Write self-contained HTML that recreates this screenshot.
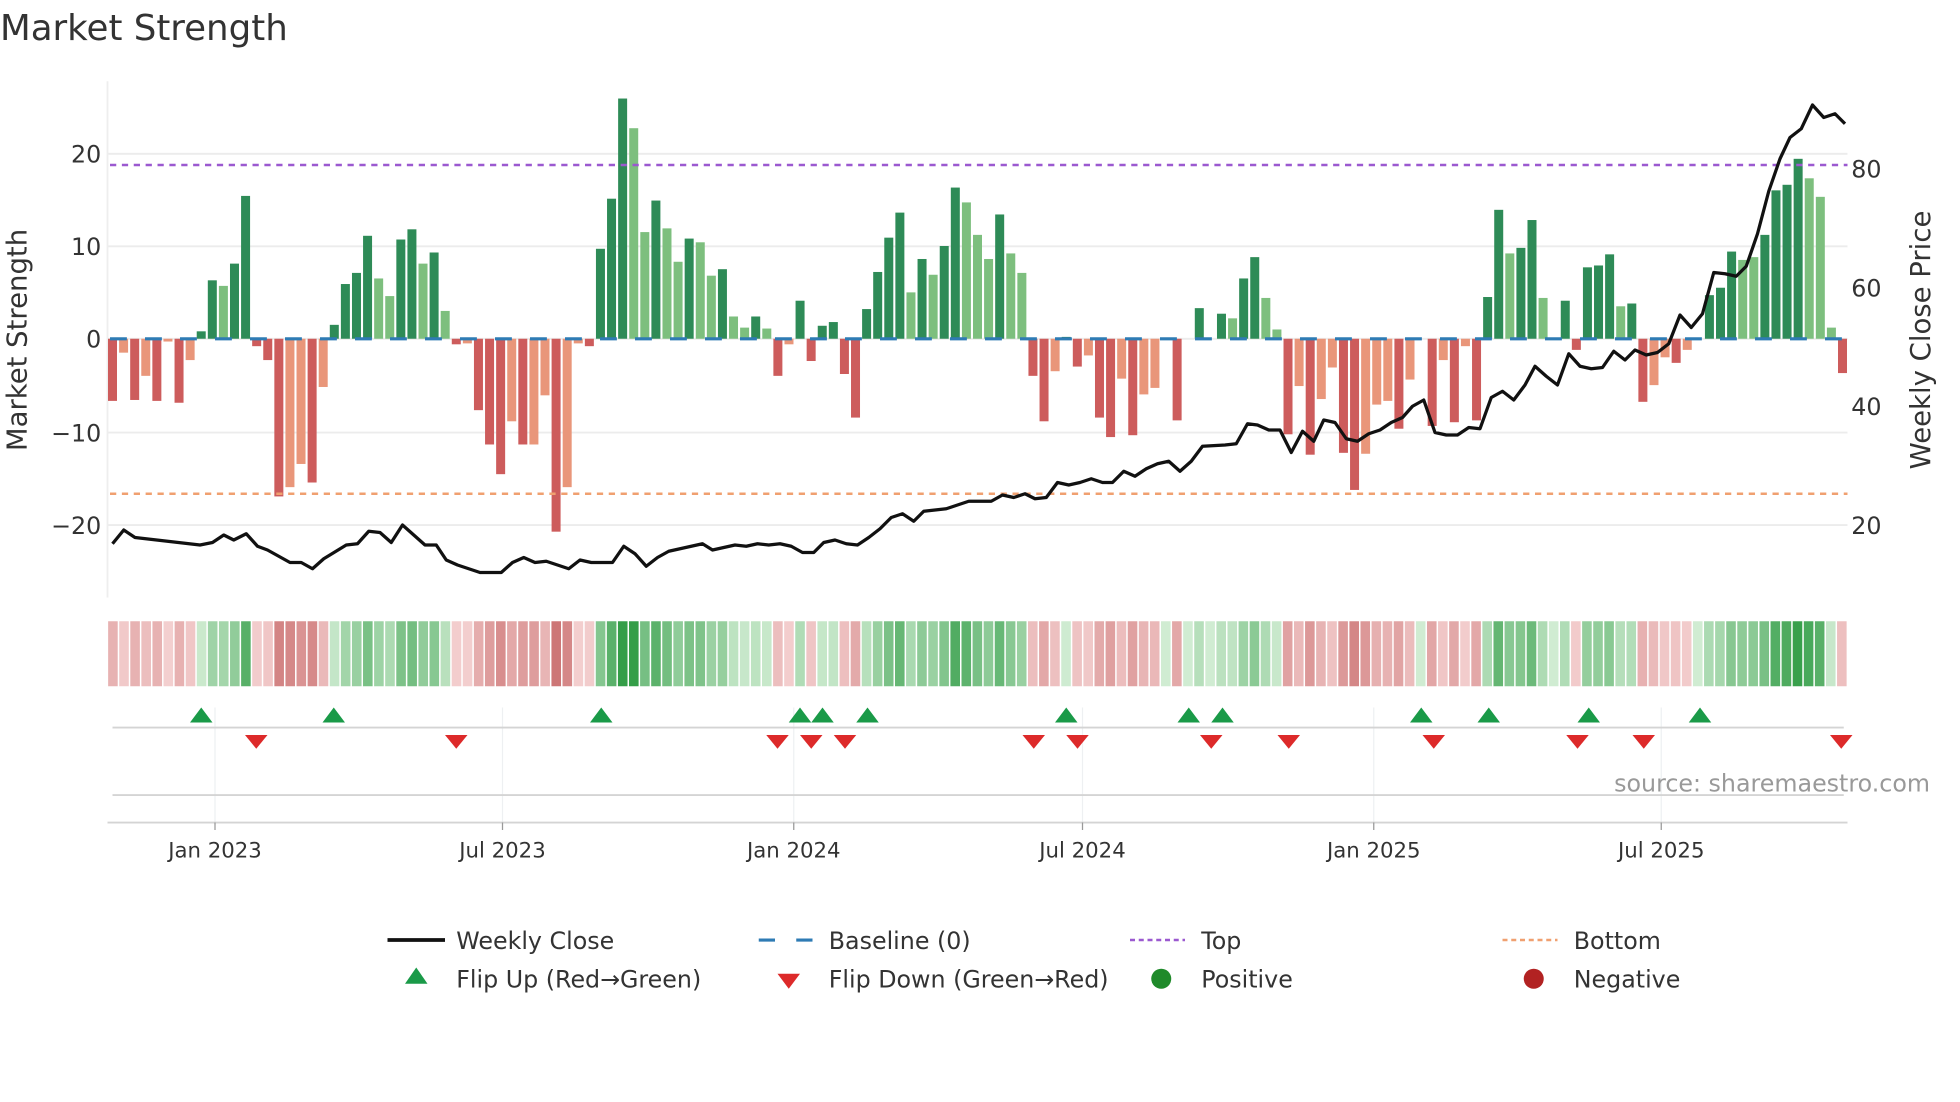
<!DOCTYPE html>
<html><head><meta charset="utf-8"><style>
html,body{margin:0;padding:0;background:#fff;}
svg{display:block;}
text{font-family:"DejaVu Sans","Liberation Sans",sans-serif;fill:#333;}
</style></head><body>
<svg id="s" width="1960" height="1102" viewBox="0 0 1568 881.6" preserveAspectRatio="none" xmlns="http://www.w3.org/2000/svg">
<text x="0" y="32" font-size="28.5">Market Strength</text>
<g stroke="#ececec" stroke-width="1.5">
<line x1="86" y1="123" x2="1478" y2="123"/><line x1="86" y1="197" x2="1478" y2="197"/>
<line x1="86" y1="271" x2="1478" y2="271"/><line x1="86" y1="346" x2="1478" y2="346"/>
<line x1="86" y1="420" x2="1478" y2="420"/>
</g>
<line x1="86" y1="65" x2="86" y2="478" stroke="#eee" stroke-width="1.5"/>
<g font-size="19" text-anchor="end">
<text x="81" y="130">20</text><text x="81" y="204">10</text><text x="81" y="278">0</text>
<text x="81" y="353">−10</text><text x="81" y="427">−20</text>
</g>
<g font-size="19">
<text x="1481" y="142">80</text><text x="1481" y="237">60</text><text x="1481" y="332">40</text><text x="1481" y="427">20</text>
</g>
<text font-size="22" transform="translate(21,272) rotate(-90)" text-anchor="middle">Market Strength</text>
<text font-size="22" transform="translate(1544,272) rotate(-90)" text-anchor="middle">Weekly Close Price</text>
<g id="bars"></g>
<line x1="88" y1="271" x2="1478" y2="271" stroke="#2e7bb4" stroke-width="2.5" stroke-dasharray="13.5 14.5"/>
<line x1="88" y1="132" x2="1478" y2="132" stroke="#9b59d0" stroke-width="2" stroke-dasharray="5 4.5"/>
<line x1="88" y1="395" x2="1478" y2="395" stroke="#f0a070" stroke-width="2" stroke-dasharray="5 4.5"/>
<polyline id="price" fill="none" stroke="#111" stroke-width="2.6" stroke-linejoin="round"/>
<g id="strip"></g>
<g stroke="#eef0f2" stroke-width="1">
<line x1="172" y1="566" x2="172" y2="660"/><line x1="402" y1="566" x2="402" y2="660"/>
<line x1="635" y1="566" x2="635" y2="660"/><line x1="866" y1="566" x2="866" y2="660"/>
<line x1="1099" y1="566" x2="1099" y2="660"/><line x1="1329" y1="566" x2="1329" y2="660"/>
</g>
<line x1="90" y1="582" x2="1475" y2="582" stroke="#d4d4d4" stroke-width="1.5"/>
<line x1="90" y1="636" x2="1475" y2="636" stroke="#d4d4d4" stroke-width="1.5"/>
<line x1="86" y1="658" x2="1478" y2="658" stroke="#d4d4d4" stroke-width="1.5"/>
<g stroke="#999" stroke-width="1">
<line x1="172" y1="658" x2="172" y2="664"/><line x1="402" y1="658" x2="402" y2="664"/>
<line x1="635" y1="658" x2="635" y2="664"/><line x1="866" y1="658" x2="866" y2="664"/>
<line x1="1099" y1="658" x2="1099" y2="664"/><line x1="1329" y1="658" x2="1329" y2="664"/>
</g>
<g id="tri"></g>
<text x="1544" y="633" font-size="19" text-anchor="end" style="fill:#999">source: sharemaestro.com</text>
<g font-size="17" text-anchor="middle">
<text x="172" y="686">Jan 2023</text><text x="402" y="686">Jul 2023</text><text x="635" y="686">Jan 2024</text>
<text x="866" y="686">Jul 2024</text><text x="1099" y="686">Jan 2025</text><text x="1329" y="686">Jul 2025</text>
</g>
<g font-size="19">
<line x1="310" y1="752" x2="356" y2="752" stroke="#111" stroke-width="3"/>
<text x="365" y="759">Weekly Close</text>
<line x1="607" y1="752" x2="652" y2="752" stroke="#2e7bb4" stroke-width="2.5" stroke-dasharray="13 17"/>
<text x="663" y="759">Baseline (0)</text>
<line x1="904" y1="752" x2="948" y2="752" stroke="#9b59d0" stroke-width="2" stroke-dasharray="4 3"/>
<text x="961" y="759">Top</text>
<line x1="1202" y1="752" x2="1246" y2="752" stroke="#f0a070" stroke-width="2" stroke-dasharray="4 3"/>
<text x="1259" y="759">Bottom</text>
<polygon points="333,774 342,787 324,787" fill="#1a9a48"/>
<text x="365" y="790">Flip Up (Red→Green)</text>
<polygon points="622,779 640,779 631,791" fill="#dd2a2a"/>
<text x="663" y="790">Flip Down (Green→Red)</text>
<circle cx="929" cy="783" r="8" fill="#1f8a2a"/>
<text x="961" y="790">Positive</text>
<circle cx="1227" cy="783" r="8" fill="#b22222"/>
<text x="1259" y="790">Negative</text>
</g>
</svg>
<script>
var NS="http://www.w3.org/2000/svg";
var V=[[-6.7,1],[-1.5,0],[-6.6,1],[-4,0],[-6.7,1],[-0.3,0],[-6.9,1],[-2.3,0],[0.8,1],[6.3,1],[5.7,0],[8.1,1],[15.4,1],[-0.8,1],[-2.3,1],[-17,1],[-16,0],[-13.5,0],[-15.5,1],[-5.2,0],
[1.5,1],[5.9,1],[7.1,1],[11.1,1],[6.5,0],[4.6,0],[10.7,1],[11.8,1],[8.1,0],[9.3,1],[3,0],[-0.6,1],[-0.5,0],[-7.7,1],[-11.4,1],[-14.6,1],[-8.9,0],[-11.4,1],[-11.4,0],[-6.1,0],
[-20.8,1],[-16,0],[-0.5,0],[-0.8,1],[9.7,1],[15.1,1],[25.9,1],[22.7,0],[11.5,0],[14.9,1],[11.9,0],[8.3,0],[10.8,1],[10.4,0],[6.8,0],[7.5,1],[2.4,0],[1.2,0],[2.4,1],[1.1,0],
[-4,1],[-0.6,0],[4.1,1],[-2.4,1],[1.4,1],[1.8,1],[-3.8,1],[-8.5,1],[3.2,1],[7.2,1],[10.9,1],[13.6,1],[5,0],[8.6,1],[6.9,0],[10,1],[16.3,1],[14.7,0],[11.2,0],[8.6,0],
[13.4,1],[9.2,0],[7.1,0],[-4,1],[-8.9,1],[-3.5,0],[0.2,1],[-3,1],[-1.8,0],[-8.5,1],[-10.6,1],[-4.3,0],[-10.4,1],[-6,0],[-5.3,0],[0,0],[-8.8,1],[0,0],[3.3,1],[0,0],
[2.7,1],[2.2,0],[6.5,1],[8.8,1],[4.4,0],[1,0],[-10.3,1],[-5.1,0],[-12.5,1],[-6.5,0],[-3.1,0],[-12.3,1],[-16.3,1],[-12.4,0],[-7.1,0],[-6.7,0],[-9.7,1],[-4.4,0],[0,0],[-9.4,1],
[-2.3,0],[-9,1],[-0.8,0],[-8.8,1],[4.5,1],[13.9,1],[9.2,0],[9.8,1],[12.8,1],[4.4,0],[0,0],[4.1,1],[-1.2,1],[7.7,1],[7.9,1],[9.1,1],[3.5,0],[3.8,1],[-6.8,1],[-5,0],
[-2,0],[-2.6,1],[-1.2,0],[0,0],[4.7,1],[5.5,1],[9.4,1],[8.5,0],[8.8,0],[11.2,1],[16,1],[16.6,1],[19.4,1],[17.3,0],[15.3,0],[1.2,0],[-3.7,1]];
var bars=document.getElementById("bars"),strip=document.getElementById("strip");
var n=V.length,step=1384/(n-1);
function mix(a,b,t){return "rgb("+[0,1,2].map(function(k){return Math.round(a[k]+(b[k]-a[k])*t)}).join(",")+")";}
for(var i=0;i<n;i++){
 var v=V[i][0],d=V[i][1],cx=90+i*step;
 if(v!==0){var h=Math.abs(v)*7.42,r=document.createElementNS(NS,"rect");
  r.setAttribute("x",cx-3.6);r.setAttribute("width",7.2);
  r.setAttribute("y",v>0?271-h:271);r.setAttribute("height",h);
  r.setAttribute("fill",v>0?(d?"#2e8b57":"#7dbf7e"):(d?"#cd5c5c":"#e9967a"));bars.appendChild(r);}
 var t=Math.min(Math.abs(v)/20,1),c;
 if(v>=0)c=mix([208,236,210],[52,158,72],t);else c=mix([244,208,208],[205,118,118],t);
 var s=document.createElementNS(NS,"rect");
 s.setAttribute("x",86+i*(1392/n)+0.5);s.setAttribute("width",1392/n-1.2);
 s.setAttribute("y",497);s.setAttribute("height",52);s.setAttribute("fill",c);strip.appendChild(s);
}
var P=[[90,435],[99,424],[108,430],[160,436],[170,434],[179,428],[187,432],[197,427],[206,437],[214,440],[232,450],[241,450],[250,455],[259,447],[277,436],[286,435],[295,425],[304,426],[313,434],[322,420],[340,436],[349,436],[357,448],[366,452],[375,455],[384,458],[401,458],[410,450],[419,446],[428,450],[437,449],[446,452],[455,455],[464,448],[473,450],[490,450],[499,437],[508,443],[517,453],[526,446],[535,441],[553,437],[562,435],[570,440],[588,436],[597,437],[606,435],[615,436],[624,435],[633,437],[642,442],[651,442],[659,434],[668,432],[677,435],[686,436],[695,430],[704,423],[713,414],[722,411],[731,417],[739,409],[757,407],[766,404],[775,401],[793,401],[802,396],[811,398],[820,395],[828,399],[837,398],[846,386],[855,388],[864,386],[873,383],[882,386],[890,386],[899,377],[908,381],[917,375],[926,371],[935,369],[944,377],[953,369],[962,357],[980,356],[989,355],[998,339],[1006,340],[1015,344],[1024,344],[1033,362],[1042,345],[1051,353],[1059,336],[1068,338],[1077,351],[1086,353],[1095,347],[1104,344],[1113,338],[1122,334],[1130,325],[1139,320],[1148,346],[1157,348],[1166,348],[1175,342],[1184,343],[1193,318],[1202,313],[1211,320],[1220,308],[1228,293],[1237,301],[1246,308],[1255,283],[1264,293],[1273,295],[1282,294],[1291,281],[1300,288],[1308,280],[1317,284],[1326,282],[1335,275],[1344,252],[1353,262],[1362,251],[1371,218],[1380,219],[1389,221],[1397,213],[1406,187],[1415,153],[1424,127],[1432,110],[1441,103],[1450,84],[1459,94],[1468,91],[1476,99]];
document.getElementById("price").setAttribute("points",P.map(function(p){return p.join(",")}).join(" "));
var tri=document.getElementById("tri");
[161,267,481,640,658,694,853,951,978,1137,1191,1271,1360].forEach(function(x){var p=document.createElementNS(NS,"polygon");p.setAttribute("points",x+",566 "+(x+9)+",578 "+(x-9)+",578");p.setAttribute("fill","#1a9a48");tri.appendChild(p);});
[205,365,622,649,676,827,862,969,1031,1147,1262,1315,1473].forEach(function(x){var p=document.createElementNS(NS,"polygon");p.setAttribute("points",(x-9)+",588 "+(x+9)+",588 "+x+",599");p.setAttribute("fill","#dd2a2a");tri.appendChild(p);});
</script>
</body></html>
